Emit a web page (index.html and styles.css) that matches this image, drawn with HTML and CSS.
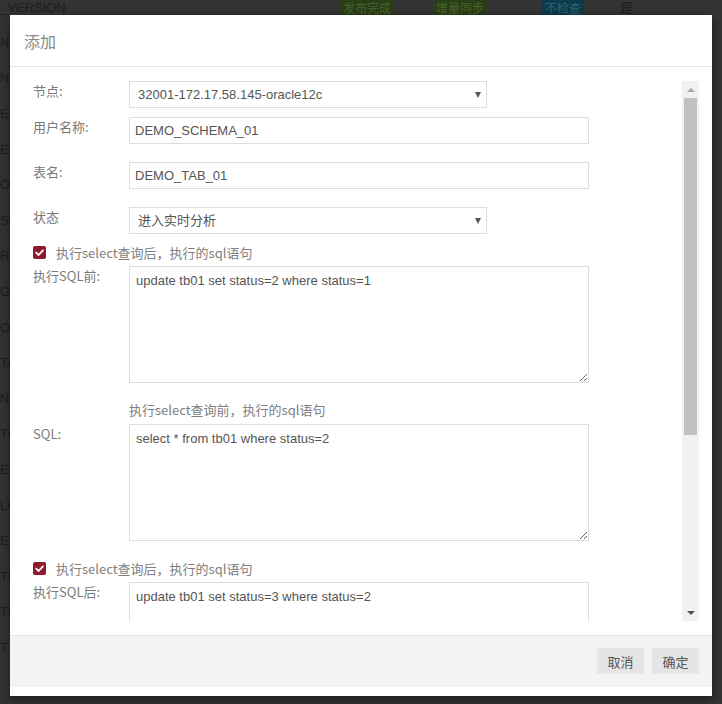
FILE: index.html
```html
<!DOCTYPE html>
<html lang="zh-CN">
<head>
<meta charset="utf-8">
<title>添加</title>
<link rel="stylesheet" href="styles.css">
</head>
<body>
<div class="page">
  <div class="bg-list">
    <div class="bg-head">
      <span class="bg-first">_VERSION</span>
      <span><span class="badge badge-green">发布完成</span></span>
      <span><span class="badge badge-green">增量同步</span></span>
      <span><span class="badge badge-teal">不检查</span></span>
      <span class="bg-first">是</span>
    </div>
    <div class="bg-row"><span class="bg-cell">NS</span></div>
    <div class="bg-row"><span class="bg-cell">NS</span></div>
    <div class="bg-row"><span class="bg-cell">EA</span></div>
    <div class="bg-row"><span class="bg-cell">ES</span></div>
    <div class="bg-row"><span class="bg-cell">ON</span></div>
    <div class="bg-row"><span class="bg-cell">SP</span></div>
    <div class="bg-row"><span class="bg-cell">RO</span></div>
    <div class="bg-row"><span class="bg-cell">G</span></div>
    <div class="bg-row"><span class="bg-cell">OD</span></div>
    <div class="bg-row"><span class="bg-cell">TA</span></div>
    <div class="bg-row"><span class="bg-cell">NT</span></div>
    <div class="bg-row"><span class="bg-cell">TO</span></div>
    <div class="bg-row"><span class="bg-cell">ES</span></div>
    <div class="bg-row"><span class="bg-cell">LO</span></div>
    <div class="bg-row"><span class="bg-cell">E_</span></div>
    <div class="bg-row"><span class="bg-cell">TE</span></div>
    <div class="bg-row"><span class="bg-cell">TE</span></div>
    <div class="bg-row"><span class="bg-cell">T</span></div>
    <div class="bg-foot">软件开发小组</div>
  </div>
</div>

<div class="modal">
  <div class="modal-header">
    <h3 class="modal-title">添加</h3>
  </div>
  <div class="modal-body">
    <div class="scroller">
      <div class="form">
        <div class="row row-tight">
          <label class="lbl">节点:</label>
          <div class="select-wrap">
            <select class="select"><option>32001-172.17.58.145-oracle12c</option></select>
            <span class="caret"></span>
          </div>
        </div>
        <div class="row">
          <label class="lbl">用户名称:</label>
          <input class="input" type="text" value="DEMO_SCHEMA_01">
        </div>
        <div class="row">
          <label class="lbl">表名:</label>
          <input class="input" type="text" value="DEMO_TAB_01">
        </div>
        <div class="row row-last">
          <label class="lbl">状态</label>
          <div class="select-wrap">
            <select class="select"><option>进入实时分析</option></select>
            <span class="caret"></span>
          </div>
        </div>

        <div class="check-row check-first">
          <span class="check"><svg viewBox="0 0 13 13" width="13" height="13"><path d="M3.2 6.6 L5.6 9 L9.9 4.4" fill="none" stroke="#fff" stroke-width="1.8" stroke-linecap="round" stroke-linejoin="round"/></svg></span>
          <span class="check-text">执行select查询后，执行的sql语句</span>
        </div>
        <div class="row row-area">
          <label class="lbl">执行SQL前:</label>
          <textarea class="area">update tb01 set status=2 where status=1</textarea>
        </div>

        <div class="help">执行select查询前，执行的sql语句</div>
        <div class="row row-area">
          <label class="lbl">SQL:</label>
          <textarea class="area">select * from tb01 where status=2</textarea>
        </div>

        <div class="check-row">
          <span class="check"><svg viewBox="0 0 13 13" width="13" height="13"><path d="M3.2 6.6 L5.6 9 L9.9 4.4" fill="none" stroke="#fff" stroke-width="1.8" stroke-linecap="round" stroke-linejoin="round"/></svg></span>
          <span class="check-text">执行select查询后，执行的sql语句</span>
        </div>
        <div class="row row-area">
          <label class="lbl">执行SQL后:</label>
          <textarea class="area">update tb01 set status=3 where status=2</textarea>
        </div>
      </div>
      <div class="scrollbar">
        <div class="sb-btn"><span class="arrow-up"></span></div>
        <div class="sb-track"><div class="sb-thumb"></div></div>
        <div class="sb-btn"><span class="arrow-down"></span></div>
      </div>
    </div>
  </div>
  <div class="modal-footer">
    <button class="btn" type="button">取消</button>
    <button class="btn" type="button">确定</button>
  </div>
</div>
</body>
</html>
```

FILE: styles.css
```css
html, body {
  margin: 0;
  padding: 0;
}

body {
  width: 722px;
  height: 704px;
  overflow: hidden;
  background: #333333;
  font-family: "Liberation Sans", "Noto Sans CJK SC", sans-serif;
  font-size: 13px;
}

/* ---------- background page (under the overlay) ---------- */
.page {
  width: 722px;
  height: 704px;
  overflow: hidden;
  color: #1e1e1e;
}

.bg-head {
  height: 24.8px;
  display: grid;
  grid-template-columns: 340px 93px 109px 78px auto;
  align-items: start;
  white-space: nowrap;
}

.bg-first {
  line-height: 15px;
  font-family: "Liberation Sans", "Noto Sans CJK SC", sans-serif;
  font-size: 13px;
}

.bg-row {
  height: 35.6px;
  line-height: 35.6px;
  white-space: nowrap;
}

.bg-cell {
  display: inline-block;
  width: 10px;
  overflow: hidden;
  vertical-align: top;
  font-size: 13px;
}

.badge {
  display: inline-block;
  padding: 0 3px;
  line-height: 15px;
  font-family: "Noto Sans CJK SC", sans-serif;
  font-size: 12px;
}

.badge-green {
  background: #2b3c18;
  color: #46662a;
}

.badge-teal {
  background: #0e3b4b;
  color: #2c6275;
}

.bg-foot {
  margin-top: 4px;
  padding-left: 478px;
  line-height: 20px;
  font-family: "Noto Sans CJK SC", sans-serif;
}

/* ---------- modal ---------- */
.modal {
  position: absolute;
  left: 10px;
  top: 15px;
  width: 702px;
  height: 681px;
  box-sizing: border-box;
  padding-bottom: 9px;
  background: #ffffff;
  box-shadow: 0 3px 9px rgba(0, 0, 0, 0.5);
  display: flex;
  flex-direction: column;
}

.modal-header {
  height: 52px;
  box-sizing: border-box;
  border-bottom: 1px solid #e5e5e5;
  padding: 0 14px;
  display: flex;
  align-items: center;
}

.modal-title {
  margin: 0;
  font-family: "Noto Sans CJK SC", sans-serif;
  font-weight: normal;
  font-size: 16px;
  color: #8a8a8a;
}

.modal-body {
  height: 568px;
  box-sizing: border-box;
  padding: 14px 13px;
}

.scroller {
  height: 540px;
  display: flex;
}

.form {
  flex: 1;
  overflow: hidden;
  padding-left: 10px;
}

.row {
  display: grid;
  grid-template-columns: 96px 1fr;
  align-items: start;
  margin-bottom: 18px;
}

.row-tight {
  margin-bottom: 9px;
}

.row-last {
  margin-bottom: 0;
}

.row-area {
  margin-bottom: 0;
}

.lbl {
  line-height: 20px;
  font-family: "Noto Sans CJK SC", sans-serif;
  font-size: 13px;
  color: #7a7a7a;
}

.input {
  width: 460px;
  height: 27px;
  box-sizing: border-box;
  margin: 0;
  padding: 0 5px;
  border: 1px solid #dddddd;
  outline: none;
  font-family: "Liberation Sans", "Noto Sans CJK SC", sans-serif;
  font-size: 13px;
  color: #555555;
  background: #ffffff;
}

.select-wrap {
  position: relative;
  width: 358px;
  height: 27px;
}

.select {
  -webkit-appearance: none;
  appearance: none;
  width: 358px;
  height: 27px;
  box-sizing: border-box;
  margin: 0;
  padding: 0 20px 0 8px;
  border: 1px solid #dddddd;
  border-radius: 0;
  outline: none;
  background: #ffffff;
  font-family: "Liberation Sans", "Noto Sans CJK SC", sans-serif;
  font-size: 13px;
  color: #555555;
}

.caret {
  position: absolute;
  right: 6px;
  top: 11px;
  width: 0;
  height: 0;
  border-left: 3.5px solid transparent;
  border-right: 3.5px solid transparent;
  border-top: 6px solid #555555;
  pointer-events: none;
}

.check-row {
  display: flex;
  align-items: center;
  height: 20px;
  margin-top: 17px;
  margin-bottom: 4px;
}

.check-first {
  margin-top: 8px;
}

.check {
  width: 13px;
  height: 13px;
  border-radius: 2px;
  background: #8e1b2b;
  display: flex;
  margin-right: 10px;
}

.check svg {
  display: block;
}

.check-text,
.help {
  font-family: "Noto Sans CJK SC", sans-serif;
  font-size: 13px;
  color: #808080;
}

.help {
  margin-top: 17px;
  margin-bottom: 4px;
  padding-left: 96px;
  line-height: 20px;
}

.area {
  display: block;
  width: 460px;
  height: 117px;
  box-sizing: border-box;
  margin: 0;
  padding: 6px;
  border: 1px solid #dddddd;
  outline: none;
  font-family: "Liberation Sans", "Noto Sans CJK SC", sans-serif;
  font-size: 13px;
  line-height: 16px;
  color: #555555;
  resize: both;
}

/* ---------- fake scrollbar ---------- */
.scrollbar {
  width: 17px;
  background: #f1f1f1;
  display: flex;
  flex-direction: column;
}

.sb-btn {
  height: 17px;
  display: flex;
  align-items: center;
  justify-content: center;
}

.sb-track {
  flex: 1;
  padding: 0 2px;
}

.sb-thumb {
  height: 337px;
  background: #c1c1c1;
}

.arrow-up {
  width: 0;
  height: 0;
  border-left: 4px solid transparent;
  border-right: 4px solid transparent;
  border-bottom: 4px solid #a3a3a3;
}

.arrow-down {
  width: 0;
  height: 0;
  border-left: 4px solid transparent;
  border-right: 4px solid transparent;
  border-top: 4px solid #505050;
}

/* ---------- footer ---------- */
.modal-footer {
  height: 52px;
  box-sizing: border-box;
  border-top: 1px solid #e5e5e5;
  background: #f3f3f3;
  padding: 12px 13px 0 0;
  display: flex;
  justify-content: flex-end;
  align-items: flex-start;
  gap: 8px;
}

.btn {
  width: 47px;
  height: 26px;
  margin: 0;
  padding: 0;
  border: none;
  border-radius: 0;
  background: #e5e5e5;
  font-family: "Noto Sans CJK SC", sans-serif;
  font-size: 13px;
  color: #555555;
}
```
